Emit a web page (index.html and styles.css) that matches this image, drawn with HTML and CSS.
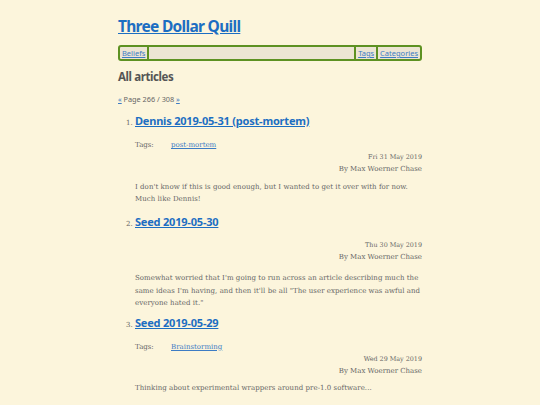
FILE: index.html
```html
<!DOCTYPE html>
<html>
<head>
<meta charset="utf-8">
<link rel="stylesheet" href="styles.css">
</head>
<body>
<div class="page">
  <h1 class="site-title"><a href="#">Three Dollar Quill</a></h1>
  <nav class="nav">
    <a href="#" class="nav-item">Beliefs</a>
    <span class="nav-spacer"></span>
    <a href="#" class="nav-item">Tags</a>
    <a href="#" class="nav-item">Categories</a>
  </nav>
  <h2 class="section-title">All articles</h2>
  <p class="pager"><a href="#">«</a> Page 266 / 308 <a href="#">»</a></p>
  <ol class="articles" start="1">
    <li class="article">
      <h3 class="article-title"><a href="#">Dennis 2019-05-31 (post-mortem)</a></h3>
      <div class="tags"><span class="tags-label">Tags:</span><a href="#">post-mortem</a></div>
      <div class="meta"><div class="date">Fri 31 May 2019</div><div>By Max Woerner Chase</div></div>
      <p class="summary">I don't know if this is good enough, but I wanted to get it over with for now. Much like Dennis!</p>
    </li>
    <li class="article">
      <h3 class="article-title"><a href="#">Seed 2019-05-30</a></h3>
      <div class="meta meta-notags"><div class="date">Thu 30 May 2019</div><div>By Max Woerner Chase</div></div>
      <p class="summary">Somewhat worried that I'm going to run across an article describing much the same ideas I'm having, and then it'll be all "The user experience was awful and everyone hated it."</p>
    </li>
    <li class="article">
      <h3 class="article-title"><a href="#">Seed 2019-05-29</a></h3>
      <div class="tags"><span class="tags-label">Tags:</span><a href="#">Brainstorming</a></div>
      <div class="meta"><div class="date">Wed 29 May 2019</div><div>By Max Woerner Chase</div></div>
      <p class="summary">Thinking about experimental wrappers around pre-1.0 software...</p>
    </li>
  </ol>
</div>
</body>
</html>
```
FILE: styles.css
```css
html, body {
  margin: 0;
  padding: 0;
  background: #fcf5dc;
}
body {
  font-family: "DejaVu Serif", serif;
  color: #666;
}
a { color: #1c6ec2; }
.page {
  width: 304px;
  margin: 0 auto;
  padding-top: 14px;
}
.site-title {
  margin: 0;
  font-family: "Noto Sans", sans-serif;
  font-size: 15.5px;
  letter-spacing: -0.7px;
  font-weight: 700;
  line-height: 24px;
}
.site-title a { color: #1c6ec2; }
.nav {
  display: flex;
  margin-top: 7px;
  border: 2px solid #5d9122;
  border-radius: 3px;
  background: #ece5d3;
  height: 12px;
  font-family: "Noto Sans", sans-serif;
  font-size: 7.5px;
  line-height: 12px;
}
.nav-item {
  padding: 0 2px;
  color: #3d7cc4;
}
.nav-spacer {
  flex: 1;
  border-left: 2px solid #5d9122;
  border-right: 2px solid #5d9122;
}
.nav-item + .nav-item { border-left: 2px solid #5d9122; }
.section-title {
  margin: 8px 0 0;
  font-family: "Noto Sans", sans-serif;
  font-size: 11.5px;
  letter-spacing: -0.4px;
  font-weight: 700;
  color: #555;
  line-height: 16px;
}
.pager {
  margin: 9px 0 0;
  font-family: "Noto Sans", sans-serif;
  font-size: 7.3px;
  line-height: 10px;
  color: #666;
}
.pager a { color: #3d7cc4; }
.articles {
  margin: 7px 0 0;
  padding-left: 17px;
  font-size: 7px;
}
.article-title {
  margin: 0;
  font-family: "Noto Sans", sans-serif;
  font-size: 11px;
  letter-spacing: -0.2px;
  font-weight: 700;
  line-height: 20px;
}
.tags {
  margin-top: 8px;
  font-size: 7px;
  line-height: 12px;
}
.tags a { color: #3d7cc4; }
.tags-label {
  display: inline-block;
  width: 36px;
}
.meta {
  text-align: right;
  font-size: 7px;
  line-height: 12px;
}
.date {
  font-size: 6.4px;
}
.meta-notags { margin-top: 7px; }
.summary {
  margin: 5.5px 0 6px;
  font-size: 7px;
  letter-spacing: 0.05px;
  line-height: 12.5px;
}
.meta-notags + .summary {
  margin-top: 9.5px;
  margin-bottom: 3px;
}
```
